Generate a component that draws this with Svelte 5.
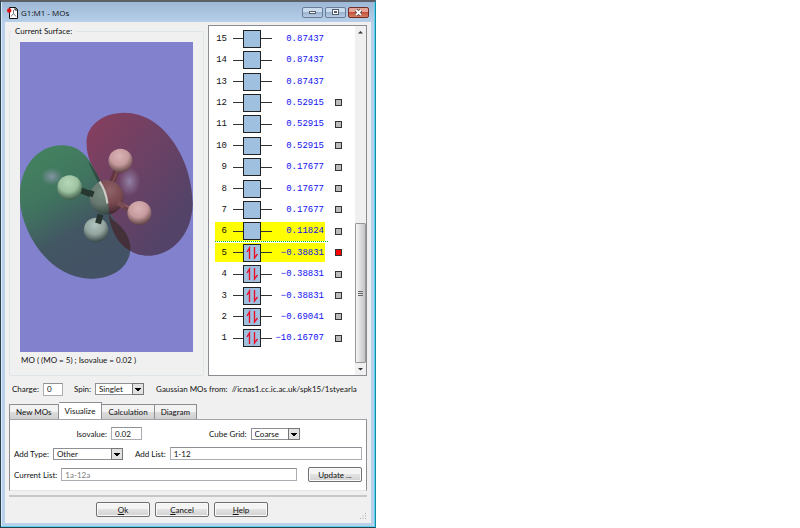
<script>
  const orbitals = [
    { n: 15, e: '0.87437' },
    { n: 14, e: '0.87437' },
    { n: 13, e: '0.87437' },
    { n: 12, e: '0.52915', mark: true },
    { n: 11, e: '0.52915', mark: true },
    { n: 10, e: '0.52915', mark: true },
    { n: 9, e: '0.17677', mark: true },
    { n: 8, e: '0.17677', mark: true },
    { n: 7, e: '0.17677', mark: true },
    { n: 6, e: '0.11824', mark: true, lit: true, gap: true },
    { n: 5, e: '−0.38831', mark: true, lit: true, full: true },
    { n: 4, e: '−0.38831', mark: true, full: true },
    { n: 3, e: '−0.38831', mark: true, full: true },
    { n: 2, e: '−0.69041', mark: true, full: true },
    { n: 1, e: '−10.16707', mark: true, full: true }
  ];
  const tabs = ['New MOs', 'Visualize', 'Calculation', 'Diagram'];
  let tab = $state('Visualize');
  let current = $state(5);
  let charge = $state('0');
  let isovalue = $state('0.02');
  let addList = $state('1-12');
</script>

{#snippet dropdown(id, value, options)}
  <span class="drop {id}">
    <select {id} {value}>
      {#each options as o}<option>{o}</option>{/each}
    </select>
    <svg class="arrow" viewBox="0 0 12 12" aria-hidden="true">
      <rect x=".5" y=".5" width="11" height="11" fill="#e2e2e2" stroke="#777" />
      <path d="M3 5h6v1H8v1H7v1H5V7H4V6H3z" fill="#000" />
    </svg>
  </span>
{/snippet}

<div class="window">
  <header>
    <svg class="appicon" viewBox="0 0 12 13" aria-hidden="true">
      <path d="M2.500 1.500h6l2 2v9h-8z" fill="#fff" stroke="#111" />
      <path d="M8 1v3h3" fill="none" stroke="#111" />
      <path d="M6.500 4v3.500L4 10.500M6.500 7.500l2.500 3" fill="none" stroke="#555" stroke-width=".8" />
      <circle cx="2.200" cy="4.500" r="2.200" fill="#e01010" />
    </svg>
    <h1>G1:M1 - MOs</h1>
    <div class="controls">
      <button aria-label="Minimize"><svg viewBox="0 0 19 9"><rect x="6.500" y="3.500" width="6" height="2" fill="#fff" stroke="#555e6b" /></svg></button>
      <button aria-label="Maximize"><svg viewBox="0 0 19 9"><rect x="6.500" y="1.500" width="6" height="5" fill="#fff" stroke="#555e6b" /><rect x="8.500" y="3.500" width="2" height="1" fill="#9ab" stroke="#555e6b" /></svg></button>
      <button class="close" aria-label="Close"><svg viewBox="0 0 19 9"><path d="M7 2l5 5M12 2l-5 5" stroke="#5b4040" stroke-width="3.400" /><path d="M7 2l5 5M12 2l-5 5" stroke="#fff" stroke-width="1.800" /></svg></button>
    </div>
  </header>

  <main>
    <div class="top">
      <fieldset>
        <legend>Current Surface:</legend>
        <svg class="surface" viewBox="0 0 174 311" preserveAspectRatio="xMidYMid slice" role="img" aria-label="Orbital surface">
          <defs>
            <linearGradient id="green" x1=".2" y1=".1" x2=".6" y2=".9">
              <stop offset="0" stop-color="#43805f" />
              <stop offset=".35" stop-color="#40735f" />
              <stop offset=".7" stop-color="#425663" />
              <stop offset="1" stop-color="#435264" />
            </linearGradient>
            <linearGradient id="red" x1=".1" y1=".1" x2=".8" y2=".8">
              <stop offset="0" stop-color="#823f5f" />
              <stop offset=".4" stop-color="#6f4164" />
              <stop offset="1" stop-color="#544368" />
            </linearGradient>
            <radialGradient id="shine"><stop offset="0" stop-color="#a7a4c9" stop-opacity=".65" /><stop offset="1" stop-color="#9c94b5" stop-opacity="0" /></radialGradient>
            <radialGradient id="pink" cx=".45" cy=".3" r=".7"><stop offset="0" stop-color="#d9b3b7" /><stop offset=".55" stop-color="#c79b9d" /><stop offset="1" stop-color="#604446" /></radialGradient>
            <radialGradient id="mint" cx=".45" cy=".3" r=".7"><stop offset="0" stop-color="#b6d7b9" /><stop offset=".55" stop-color="#9dc2a0" /><stop offset="1" stop-color="#405c49" /></radialGradient>
            <radialGradient id="grey" cx=".45" cy=".3" r=".7"><stop offset="0" stop-color="#b2c4bf" /><stop offset=".55" stop-color="#93a49f" /><stop offset="1" stop-color="#3a4948" /></radialGradient>
            <radialGradient id="coreL" gradientUnits="userSpaceOnUse" cx="82" cy="151" r="24"><stop offset="0" stop-color="#778b80" /><stop offset=".5" stop-color="#66786f" /><stop offset="1" stop-color="#2e3d3a" /></radialGradient>
            <radialGradient id="coreR" gradientUnits="userSpaceOnUse" cx="90" cy="149" r="22"><stop offset="0" stop-color="#8f6468" /><stop offset=".6" stop-color="#78484e" /><stop offset="1" stop-color="#482a34" /></radialGradient>
            <clipPath id="right"><path d="M79 138C86 148 90 163 90 176H110V136z" /></clipPath>
            <clipPath id="lobe"><path d="M67 102C66 86 81 71 105 71C144 71 173 117 173.500 162C173 193 153 214 129 214.500C107 214 92 197 89 172C87 155 84 148 78 137C73 126 67 115 67 102z" /></clipPath>
          </defs>
          <rect x="-200" y="-200" width="600" height="720" fill="#8281cd" />
          <path d="M67 102C66 86 81 71 105 71C144 71 173 117 173.500 162C173 193 153 214 129 214.500C107 214 92 197 89 172C87 155 84 148 78 137C73 126 67 115 67 102z" fill="url(#red)" />
          <path d="M0 155C0 127 16 104 42 103.500C65 103 74 124 82 144C90 162 89 172 97 181C105 188 111 196 111 208C110 226 93 238 70 237.500C28 236 0 189 0 155z" fill="url(#green)" />
          <path clip-path="url(#lobe)" d="M89 171C91 177 94 179 97 181C105 188 111 196 111 208L110 215L92 200z" fill="#443038" />
          <path d="M68 119Q77 130 82 142L78 140Z" fill="#314d43" />
          <ellipse cx="32" cy="135" rx="11" ry="9" fill="url(#shine)" />
          <ellipse cx="110" cy="140" rx="11" ry="15" fill="url(#shine)" />
          <g fill="none">
            <path d="M90 147L98 127" stroke="#613640" stroke-width="6" />
            <path d="M91 146L99 127" stroke="#7d4b52" stroke-width="2" />
            <path d="M59 148L72 153" stroke="#26382f" stroke-width="6" />
            <path d="M98 162L111 168" stroke="#67404a" stroke-width="6" />
            <path d="M98 161L111 166" stroke="#87595f" stroke-width="2" />
          </g>
          <circle cx="101" cy="119" r="12" fill="url(#pink)" />
          <circle cx="50" cy="146" r="12.300" fill="url(#mint)" />
          <circle cx="120" cy="171.500" r="12" fill="url(#pink)" />
          <circle cx="87" cy="156" r="17" fill="url(#coreL)" />
          <circle cx="87" cy="156" r="17" fill="url(#coreR)" clip-path="url(#right)" />
          <path d="M80 140Q86 148 88 162" stroke="#d9dbd5" stroke-width="2.200" fill="none" opacity=".85" />
          <path d="M69 151L74 153" stroke="#26382f" stroke-width="6" />
          <path d="M98 161L105 165" stroke="#7a4c54" stroke-width="5" />
          <circle cx="76.500" cy="188.500" r="12.300" fill="url(#grey)" />
          <path d="M81 173L78.500 182" stroke="#26332f" stroke-width="6" />
        </svg>
        <p>MO ( (MO = 5) ; Isovalue = 0.02 )</p>
      </fieldset>

      <section class="levels" aria-label="Orbital energies">
        <div class="rows">
          {#each orbitals as o (o.n)}
            <div class="row">
              <div class="level" class:lit={o.lit}>
                <span class="num">{o.n}</span>
                <i class="line"></i>
                <span class="box">
                  {#if o.full}
                    <svg viewBox="0 0 16 16" aria-hidden="true"><path d="M5.500 14V3L3 7M10.500 2v11l3-4" fill="none" stroke="#e8112d" stroke-width="1.400" /></svg>
                  {/if}
                </span>
                <i class="line"></i>
                <span class="energy">{o.e}</span>
              </div>
              {#if o.mark}
                <button class="mark" class:on={current === o.n} aria-label="Orbital {o.n}" onclick={() => (current = o.n)}></button>
              {/if}
              {#if o.gap}<i class="gap"></i>{/if}
            </div>
          {/each}
        </div>
        <div class="scroll">
          <svg viewBox="0 0 11 12" aria-hidden="true"><path d="M3 7.500L5.500 5L8 7.500z" fill="#333" /></svg>
          <div class="track"><div class="thumb"><i></i><i></i><i></i></div></div>
          <svg viewBox="0 0 11 12" aria-hidden="true"><path d="M3 5L5.500 7.500L8 5z" fill="#333" /></svg>
        </div>
      </section>
    </div>

    <div class="settings">
      <label for="charge">Charge:</label>
      <input id="charge" bind:value={charge} />
      <label class="spinlabel" for="spin">Spin:</label>
      {@render dropdown('spin', 'Singlet', ['Singlet', 'Triplet'])}
      <span class="source">Gaussian MOs from:&nbsp; //icnas1.cc.ic.ac.uk/spk15/1styearla</span>
    </div>

    <div class="tabs" role="tablist">
      {#each tabs as t}
        <button role="tab" aria-selected={tab === t} onclick={() => (tab = t)}>{t}</button>
      {/each}
    </div>
    <div class="panel" role="tabpanel">
      <div class="line1">
        <div class="field">
          <label for="iso">Isovalue:</label>
          <input id="iso" bind:value={isovalue} />
        </div>
        <div class="field">
          <label for="cube">Cube Grid:</label>
          {@render dropdown('cube', 'Coarse', ['Coarse', 'Medium', 'Fine'])}
        </div>
      </div>
      <div class="field">
        <label for="type">Add Type:</label>
        {@render dropdown('type', 'Other', ['Other', 'All', 'Occupied'])}
        <label class="listlabel" for="list">Add List:</label>
        <input id="list" class="grow" bind:value={addList} />
      </div>
      <div class="field">
        <label for="now">Current List:</label>
        <input id="now" class="grow" value="1a-12a" readonly />
        <button class="push update">Update ...</button>
      </div>
    </div>

    <footer>
      <button class="push"><u>O</u>k</button>
      <button class="push"><u>C</u>ancel</button>
      <button class="push"><u>H</u>elp</button>
      <svg class="grip" viewBox="0 0 7 7" aria-hidden="true"><path d="M5 0h1v1H5zM5 2.500h1v1H5zM5 5h1v1H5zM2.500 2.500h1v1h-1zM2.500 5h1v1h-1zM0 5h1v1H0z" fill="#aaa" /></svg>
    </footer>
  </main>
</div>

<style>
  :global(body) {
    background: #fff;
  }
  .window,
  .window * {
    box-sizing: border-box;
  }
  .window {
    display: flex;
    flex-direction: column;
    width: 47%;
    min-width: 376px;
    min-height: 100vh;
    padding: 1px 4px 4px;
    border: 1px solid #28434d;
    border-top: 2px solid #5e6067;
    border-right-color: #138ca8;
    background: linear-gradient(#9db8d6, #b9d1ea 22px, #b9d1ea);
    box-shadow: inset -1px -1px #5fd3ee, inset 1px 0 #dce9f6;
    color: #111;
    font: 8px/10px "Lato", sans-serif;
  }
  button,
  input,
  select {
    margin: 0;
    color: inherit;
    font: inherit;
  }
  header {
    display: flex;
    align-items: center;
    height: 19px;
    padding-left: 2px;
  }
  .appicon {
    width: 12px;
    height: 13px;
  }
  h1 {
    margin: 0 0 0 2px;
    font: 8px/10px "Open Sans", sans-serif;
  }
  .controls {
    display: flex;
    gap: 2px;
    margin-left: auto;
    padding-right: 2px;
  }
  .controls button {
    width: 21px;
    height: 11px;
    padding: 0;
    border: 1px solid #697d98;
    border-radius: 2px;
    background: linear-gradient(#cbdcef 45%, #9bb4d0 50%, #b7cce4);
  }
  .controls svg {
    display: block;
    width: 19px;
    height: 9px;
  }
  .controls .close {
    border-color: #6f2e2c;
    background: linear-gradient(#e5a498 45%, #c3503c 50%, #d58060);
  }
  main {
    display: flex;
    flex: 1;
    flex-direction: column;
    padding: 3px 4px 2px;
    background: #f0f0f0;
  }
  .top {
    display: grid;
    flex: 1;
    grid-template-columns: 195fr 159fr;
    gap: 4px;
  }
  fieldset {
    display: flex;
    flex-direction: column;
    min-width: 0;
    margin: 1px 0 0;
    padding: 6px 10px 10px;
    border: 1px solid #dfe6ea;
    border-radius: 2px;
  }
  legend {
    height: 10px;
    margin-left: -8px;
    padding: 0 3px;
  }
  .surface {
    display: block;
    flex: 1 1 0;
    width: 100%;
    min-height: 310px;
  }
  fieldset p {
    margin: 3px 1px 0;
  }
  .levels {
    display: flex;
    min-width: 0;
    border: 1px solid #8a8c92;
    background: #fff;
  }
  .rows {
    display: flex;
    flex: 1;
    flex-direction: column;
    padding: 2px 0 26px 6px;
    font: 9px/12px "Liberation Mono", monospace;
  }
  .row {
    position: relative;
    display: flex;
    flex: 1;
    align-items: center;
  }
  .level {
    display: flex;
    flex: 0 0 110px;
    align-items: center;
    height: 19px;
  }
  .lit {
    background: #ff0;
  }
  .num {
    width: 12px;
    margin-right: 6px;
    text-align: right;
  }
  .line {
    width: 10px;
    height: 1px;
    background: #333;
  }
  .line:nth-of-type(2) {
    width: 11px;
  }
  .box {
    width: 18px;
    height: 18px;
    border: 1px solid #222;
    background: #a0c0e0;
  }
  .box svg {
    display: block;
    width: 16px;
    height: 16px;
  }
  .energy {
    display: flex;
    flex: 1 1 0;
    justify-content: flex-end;
    min-width: 0;
    padding-right: 1px;
    color: #1010f0;
    white-space: nowrap;
  }
  .mark {
    width: 7px;
    height: 7px;
    margin-left: 10px;
    padding: 0;
    border: 1px solid #333;
    background: #bbb;
  }
  .on {
    background: #f00;
  }
  .gap {
    position: absolute;
    bottom: 0;
    left: 0;
    width: 113px;
    border-bottom: 1px dotted #00c800;
  }
  .scroll {
    display: flex;
    flex-direction: column;
    width: 11px;
    background: #f0f0f0;
  }
  .scroll svg {
    height: 12px;
  }
  .track {
    display: flex;
    flex: 1;
    flex-direction: column;
    justify-content: flex-end;
  }
  .thumb {
    display: flex;
    flex-direction: column;
    align-items: center;
    justify-content: center;
    gap: 1px;
    height: 43%;
    border: 1px solid #979797;
    border-radius: 1px;
    background: linear-gradient(90deg, #f6f6f6, #dcdcdc 50%, #c4c4c6);
  }
  .thumb i {
    width: 5px;
    height: 1px;
    background: #666;
  }
  .settings {
    display: flex;
    align-items: center;
    height: 26px;
    padding: 0 0 0 3px;
  }
  label {
    white-space: nowrap;
  }
  input {
    height: 13px;
    padding: 0 3px;
    border: 1px solid #abadb3;
    border-top-color: #8e9096;
    border-radius: 0;
    background: #fff;
  }
  #charge {
    width: 20px;
    margin-left: 4px;
  }
  .spinlabel {
    margin-left: 11px;
  }
  .drop {
    display: grid;
    align-items: center;
    margin-left: 4px;
  }
  .drop > * {
    grid-area: 1 / 1;
  }
  select {
    appearance: none;
    width: 100%;
    height: 12px;
    padding: 0 13px 0 3px;
    border: 1px solid #8e9096;
    border-radius: 0;
    background: #fff;
  }
  .arrow {
    justify-self: end;
    width: 12px;
    height: 12px;
    pointer-events: none;
  }
  .spin,
  .cube {
    width: 49px;
  }
  .type {
    width: 70px;
  }
  .source {
    flex: 1;
    min-width: 0;
    margin-left: 12px;
    white-space: nowrap;
  }
  .tabs {
    display: flex;
    align-items: flex-end;
    height: 17px;
  }
  .tabs button {
    height: 15px;
    padding: 0 6px;
    border: 1px solid #8c8e94;
    border-bottom: 0;
    background: linear-gradient(#f2f2f2 50%, #ddd 50%, #cfcfcf);
  }
  .tabs button + button {
    border-left: 0;
  }
  .tabs button[aria-selected='true'] {
    height: 17px;
    border-left: 0;
    background: #fff;
  }
  .panel {
    display: flex;
    flex-direction: column;
    gap: 7px;
    padding: 7px 4px 8px;
    border: 1px solid #8c8e94;
    border-top-color: #a2a4aa;
    border-bottom-color: #e4e4e4;
    background: #fff;
  }
  .line1 {
    display: flex;
    justify-content: center;
    gap: 67px;
  }
  .field {
    display: flex;
    align-items: center;
  }
  .field input {
    margin-left: 4px;
  }
  #iso {
    width: 31px;
  }
  .listlabel {
    margin-left: 12px;
  }
  .grow {
    flex: 1;
    min-width: 0;
  }
  #now {
    color: #808080;
  }
  .push {
    width: 54px;
    height: 15px;
    padding: 0;
    border: 1px solid #707070;
    border-radius: 2px;
    background: linear-gradient(#f4f4f4 50%, #e2e2e2 50%, #d2d2d2);
    box-shadow: inset 0 0 0 1px #fafafa;
  }
  .update {
    margin-left: 11px;
  }
  footer {
    position: relative;
    display: flex;
    justify-content: center;
    gap: 5px;
    margin-top: 4px;
    padding: 5px 12px 4px 0;
    border-top: 2px solid #c8c8c8;
  }
  .grip {
    position: absolute;
    right: 0;
    bottom: 1px;
    width: 7px;
    height: 7px;
  }
</style>
